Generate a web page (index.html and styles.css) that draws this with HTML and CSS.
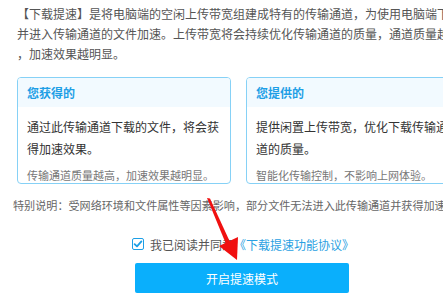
FILE: index.html
```html
<!DOCTYPE html>
<html lang="zh-CN">
<head>
<meta charset="utf-8">
<link rel="stylesheet" href="styles.css">
</head>
<body>
<div class="page">
  <div class="intro">
    <div class="line">【下载提速】是将电脑端的空闲上传带宽组建成特有的传输通道，为使用电脑端下载的用户</div>
    <div class="line">并进入传输通道的文件加速。上传带宽将会持续优化传输通道的质量，通道质量越高</div>
    <div class="line">，加速效果越明显。</div>
  </div>
  <div class="cards">
    <div class="card">
      <div class="card-head">您获得的</div>
      <div class="card-body">
        <p class="main">通过此传输通道下载的文件，将会获得加速效果。</p>
        <p class="sub">传输通道质量越高，加速效果越明显。</p>
      </div>
    </div>
    <div class="card">
      <div class="card-head">您提供的</div>
      <div class="card-body">
        <p class="main">提供闲置上传带宽，优化下载传输通道的质量。</p>
        <p class="sub">智能化传输控制，不影响上网体验。</p>
      </div>
    </div>
  </div>
  <div class="note">特别说明：受网络环境和文件属性等因素影响，部分文件无法进入此传输通道并获得加速效果。</div>
  <div class="agree">
    <svg class="check" width="12" height="12" viewBox="0 0 12 12">
      <rect x="0.5" y="0.5" width="11" height="11" rx="1.5" fill="#fff" stroke="#1c9fe6"/>
      <path d="M2.6 6.1 L5 8.4 L9.4 3.4" fill="none" stroke="#1c9fe6" stroke-width="1.8" stroke-linecap="round" stroke-linejoin="round"/>
    </svg>
    <span class="agree-text">我已阅读并同意</span><span class="link">《下载提速功能协议》</span>
  </div>
  <button class="btn">开启提速模式</button>
  <svg class="arrow" width="60" height="80" viewBox="0 0 60 80">
    <path d="M7 2 L10 2.5 L30 46 L26 48 Z" fill="#f01010"/>
    <path d="M37 64 L19 50 L38 41 Z" fill="#f01010"/>
  </svg>
</div>
</body>
</html>
```
FILE: styles.css
```css
* { box-sizing: border-box; }
html, body {
  margin: 0;
  padding: 0;
  width: 443px;
  height: 299px;
  overflow: hidden;
  background: #fff;
}
.page {
  position: relative;
  width: 443px;
  height: 299px;
  overflow: hidden;
  font-family: "Noto Sans CJK SC", "Noto Sans", sans-serif;
  color: #555;
}
.intro {
  padding: 4px 0 0 17px;
  font-size: 12px;
  line-height: 20px;
  color: #555;
}
.line { white-space: nowrap; }
.cards {
  display: flex;
  gap: 15px;
  margin: 13px 0 0 17px;
  width: 460px;
}
.card {
  flex: 0 0 214px;
  border: 1px solid #86d1f6;
  border-radius: 4px;
  overflow: hidden;
}
.card-head {
  height: 29px;
  line-height: 29px;
  padding-left: 9px;
  background: #f2faff;
  color: #1e9fe6;
  font-weight: bold;
  font-size: 12px;
}
.card-body {
  padding: 9px 9px 0;
}
.main {
  margin: 0;
  font-size: 12px;
  line-height: 22px;
  color: #333;
}
.sub {
  margin: 7px 0 0;
  font-size: 11px;
  line-height: 16px;
  color: #777;
  white-space: nowrap;
}
.note {
  margin: 13px 0 0 13px;
  font-size: 11.1px;
  line-height: 16px;
  color: #666;
  white-space: nowrap;
}
.agree {
  display: flex;
  align-items: center;
  margin: 23px 0 0 132px;
  height: 16px;
  font-size: 12px;
  white-space: nowrap;
}
.check { margin-right: 6px; flex: none; }
.agree-text { color: #555; }
.link { color: #2a9fe2; }
.btn {
  display: block;
  margin: 11px 0 0 135px;
  width: 214px;
  height: 30px;
  border: none;
  border-radius: 2px;
  background: #0aaffc;
  color: #fff;
  font-family: "Noto Sans CJK SC", "Noto Sans", sans-serif;
  font-size: 12px;
  padding: 0;
}
.arrow {
  position: absolute;
  left: 200px;
  top: 196px;
}
```
